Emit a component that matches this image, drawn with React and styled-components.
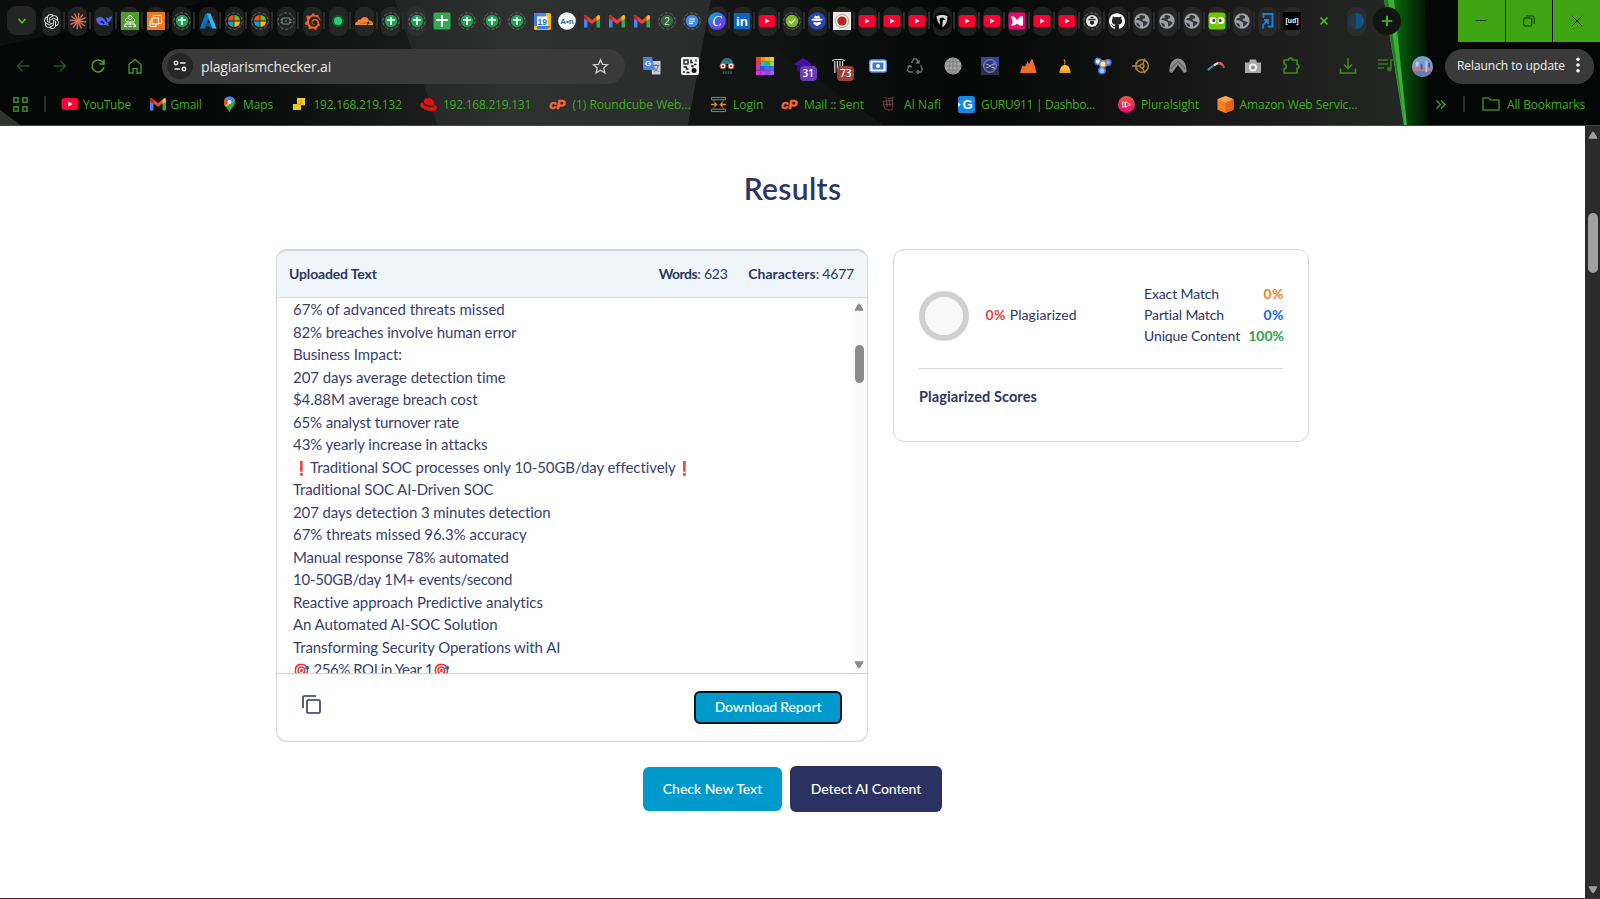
import React from 'react';
import styled, { createGlobalStyle } from 'styled-components';
import { SiOpenai, SiGithub, SiGrafana, SiCloudflare, SiRedhat } from 'react-icons/si';

const GlobalStyle = createGlobalStyle`
  *, *::before, *::after { box-sizing: border-box; }
  body { margin: 0; background: #fff; overflow: hidden; }
`;
const ui = '"Open Sans", "Noto Sans", sans-serif';
const body = 'Lato, "Noto Sans", sans-serif';
const green = '#3fae1c';
const navy = '#2c3564';

/* ---------- browser frame ---------- */
const Screen = styled.div`
  display: flex;
  flex-direction: column;
  width: 1600px;
  height: 899px;
  background: #fff;
  border-bottom: 1px solid #333;
`;
const Chrome = styled.header`
  position: relative;
  flex: none;
  display: flex;
  flex-direction: column;
  height: 126px;
  background: #050606;
  border-bottom: 1px solid #45453f;
  overflow: hidden;
  font-family: ${ui};
`;
const Wallpaper = styled.svg`
  position: absolute;
  inset: 0;
  width: 1600px;
  height: 126px;
`;
const TabStrip = styled.div`
  position: relative;
  display: flex;
  height: 42px;
`;
const TabMenu = styled.div`
  display: flex;
  align-items: center;
  justify-content: center;
  width: 29px;
  height: 29px;
  margin: 6px 2.5px 0 7px;
  border-radius: 9px;
  background: #252525;
`;
const Tab = styled.div`
  display: flex;
  align-items: center;
  justify-content: center;
  width: ${p => p.$w}px;
  height: 42px;
  background: ${p => (p.$last ? 'none' : 'linear-gradient(#2b2b2b, #2b2b2b) 100% 12px / 2px 17px no-repeat')};
`;
const Pill = styled.div`
  display: flex;
  align-items: center;
  justify-content: center;
  width: 19px;
  height: 29px;
  border-radius: 8px;
  background: ${p => (p.$plain ? 'transparent' : 'rgba(54, 54, 54, 0.5)')};
  svg { flex: none; overflow: visible; }
`;
const CloseTab = styled.div`
  display: flex;
  align-items: center;
  justify-content: center;
  width: 39px;
`;
const NewTab = styled.div`
  display: flex;
  align-items: center;
  justify-content: center;
  width: 28px;
  height: 28px;
  margin: 7px 0 0 4px;
  border-radius: 50%;
  background: #131513;
`;
const WindowButtons = styled.div`
  display: flex;
  gap: 1px;
  margin-left: auto;
`;
const WindowButton = styled.div`
  display: flex;
  align-items: center;
  justify-content: center;
  width: ${p => p.$w || 47}px;
  height: 42px;
  background: #40a512;
`;
const Toolbar = styled.div`
  position: relative;
  display: flex;
  align-items: center;
  height: 48px;
`;
const NavButtons = styled.div`
  display: flex;
  padding-left: 4px;
  width: 162px;
`;
const NavButton = styled.div`
  display: flex;
  justify-content: center;
  width: 37.5px;
`;
const AddressBar = styled.div`
  display: flex;
  align-items: center;
  width: 463px;
  height: 35px;
  padding: 0 16px 0 5px;
  border-radius: 18px;
  background: #3a3a3a;
  color: #e8e8e8;
  font-size: 14px;
  letter-spacing: -0.17px;
`;
const SiteInfo = styled.div`
  display: flex;
  align-items: center;
  justify-content: center;
  width: 26px;
  height: 26px;
  margin-right: 8px;
  border-radius: 50%;
  background: #262626;
`;
const Url = styled.span`flex: 1;`;
const Extensions = styled.div`
  display: flex;
  padding-left: 8.5px;
`;
const Extension = styled.div`
  position: relative;
  display: flex;
  justify-content: center;
  width: 37.57px;
`;
const Badge = styled.span`
  position: absolute;
  left: 16px;
  top: 9px;
  width: 17px;
  height: 15px;
  border-radius: 4px;
  background: ${p => p.$bg};
  color: #fff;
  font-size: 10px;
  font-weight: 600;
  line-height: 15px;
  text-align: center;
`;
const ToolbarEnd = styled.div`
  display: flex;
  align-items: center;
  margin-left: auto;
  padding-right: 6px;
`;
const EndIcon = styled.div`
  display: flex;
  width: ${p => p.$w}px;
`;
const Relaunch = styled.div`
  display: flex;
  align-items: center;
  justify-content: space-between;
  width: 149px;
  height: 35px;
  padding: 0 14px 2px 12px;
  border-radius: 18px;
  background: #3a3a3a;
  color: #f2f2f2;
  font-size: 12px;
  letter-spacing: -0.07px;
`;
const Bookmarks = styled.div`
  position: relative;
  display: flex;
  align-items: center;
  height: 28px;
  margin-bottom: 7px;
  color: ${green};
`;
const AppsButton = styled.div`
  display: flex;
  width: 32px;
  margin-left: 12px;
`;
const Divider = styled.div`
  width: 2px;
  height: 16px;
  background: #2c2c2c;
  margin-right: ${p => p.$gap}px;
`;
const Bookmark = styled.div`
  display: flex;
  align-items: center;
  gap: ${p => p.$gap || 6}px;
  width: ${p => p.$w}px;
  font-size: 12px;
  letter-spacing: ${p => p.$ls}px;
  white-space: nowrap;
  svg { flex: none; }
`;
const More = styled.div`
  display: flex;
  margin-left: auto;
  width: 28px;
`;

/* ---------- page ---------- */
const Viewport = styled.div`
  display: flex;
  flex: 1;
  min-height: 0;
`;
const Page = styled.main`
  flex: 1;
  display: flex;
  flex-direction: column;
  align-items: center;
  font-family: ${body};
  color: ${navy};
`;
const PageScroll = styled.div`
  display: flex;
  flex-direction: column;
  align-items: center;
  width: 15px;
  padding: 5px 0 4px;
  background: #2b2b2b;
`;
const Thumb = styled.div`
  width: ${p => p.$w}px;
  height: ${p => p.$h}px;
  margin: ${p => p.$top}px 0 auto;
  border-radius: 5px;
  background: ${p => p.$bg};
`;
const Title = styled.h1`
  margin: 42px 0 0;
  font-size: 30px;
  font-weight: 600;
  line-height: 40px;
  letter-spacing: 0.35px;
`;
const Columns = styled.div`
  display: flex;
  align-items: flex-start;
  gap: 25px;
  width: 1033px;
  margin-top: 41px;
`;
const TextCard = styled.section`
  display: flex;
  flex-direction: column;
  width: 592px;
  height: 493px;
  border: 1px solid #d2d4d6;
  border-top-width: 2px;
  border-radius: 11px;
  overflow: hidden;
`;
const CardHead = styled.div`
  display: flex;
  align-items: center;
  height: 47px;
  padding: 0 13px 2px 12px;
  border-bottom: 1px solid #d8dcdf;
  background: #eff5f8;
  font-size: 14px;
`;
const HeadLabel = styled.b`letter-spacing: ${p => p.$ls}px;`;
const Counter = styled.span`
  margin-left: ${p => p.$left};
  letter-spacing: -0.2px;
`;
const ScrollArea = styled.div`
  display: flex;
  flex: none;
  height: 376px;
  border-bottom: 1px solid #cfcfcf;
  overflow: hidden;
`;
const Lines = styled.div`
  flex: 1;
  padding-left: 16px;
`;
const Line = styled.div`
  height: 22.5px;
  font-size: 15px;
  line-height: 23px;
  letter-spacing: ${p => p.$ls}px;
  color: #373f70;
  white-space: pre;
`;
const Emoji = styled.span`
  display: inline-flex;
  justify-content: center;
  width: 17px;
  font-size: 13.5px;
  line-height: 16px;
  letter-spacing: 0;
`;
const CardScroll = styled.div`
  display: flex;
  flex-direction: column;
  align-items: center;
  width: 16px;
  padding: 5px 0 4px;
  background: #fafafa;
`;
const CardFoot = styled.div`
  display: flex;
  align-items: center;
  justify-content: space-between;
  flex: 1;
  padding: 0 25px;
`;
const CopyIcon = styled.div`
  display: flex;
  padding-bottom: 6px;
`;
const Button = styled.button`
  width: ${p => p.$w}px;
  height: ${p => p.$h}px;
  padding: 0 0 ${p => (p.$focus ? 2 : 1)}px;
  border: ${p => (p.$focus ? '2px solid #06141a' : '0')};
  border-radius: 6px;
  background: ${p => (p.$dark ? '#2b3261' : '#0099cc')};
  color: #fff;
  font: 500 14px ${body};
  letter-spacing: ${p => p.$ls}px;
`;
const ScoreCard = styled.section`
  width: 416px;
  height: 193px;
  padding: 0 25px;
  border: 1px solid #d4d6d8;
  border-radius: 11px;
`;
const Scores = styled.div`
  display: flex;
  align-items: center;
  height: 119px;
  padding-top: 13px;
  border-bottom: 1px solid #d4d4d4;
  font-size: 14px;
`;
const Ring = styled.div`
  width: 50px;
  height: 50px;
  margin-right: 16.5px;
  border: 6px solid #d0d0d0;
  border-radius: 50%;
  background: #f9f9f9;
`;
const Plagiarized = styled.span`
  padding-bottom: 2px;
  letter-spacing: 0.08px;
`;
const Value = styled.b`
  color: ${p => p.$c};
  letter-spacing: ${p => p.$ls || 0}px;
`;
const Matches = styled.div`
  display: grid;
  grid-template-rows: repeat(3, 21.3px);
  width: 140px;
  margin: 0 -1px 0 auto;
  padding-bottom: 2px;
`;
const Match = styled.div`
  display: flex;
  justify-content: space-between;
  line-height: 21px;
  letter-spacing: -0.13px;
`;
const ScoresTitle = styled.h2`
  margin: 17px 0 0;
  font-size: 14.5px;
  line-height: 22px;
  letter-spacing: 0.1px;
`;
const Actions = styled.div`
  display: flex;
  align-items: center;
  gap: 8px;
  margin: 24px 0 0 0;
`;

/* ---------- icons ---------- */
const Svg = ({ s = 18, vb = 18, children }) => (
  <svg width={s} height={s} viewBox={`0 0 ${vb} ${vb}`} fill="none">{children}</svg>
);
const Dashes = () => <circle cx="9" cy="9" r="8.2" stroke="#6a706a" strokeWidth="1" strokeDasharray="3.5 1.65" />;
const YouTube = () => <Svg><rect x=".6" y="3" width="16.8" height="12" rx="2.8" fill="#ff0033" /><path d="M7.3 6.5v5l4.3-2.5z" fill="#fff" /></Svg>;
const Gmail = () => (
  <Svg>
    <path d="M1 4.5v11h3.5V7z" fill="#4285f4" /><path d="M17 4.5v11h-3.500V7z" fill="#34a853" />
    <path d="M1 3.5 2.500 3 9 8l6.500-5L17 3.500V6L9 12 1 6z" fill="#ea4335" />
    <path d="M13.500 4.500 15.500 3 17 4v2.500l-3.500 2.500z" fill="#fbbc04" /><path d="M1 4v2.500L4.500 9V5L2.500 3z" fill="#c5221f" />
  </Svg>
);
const SheetRing = () => <Svg><Dashes /><circle cx="9" cy="9" r="6.200" fill="#1fa352" /><path d="M9 5v8M5 8h8" stroke="#fff" strokeWidth="1.700" /></Svg>;
const Sheet = () => <Svg><rect x=".5" y=".5" width="17" height="17" rx="1.500" fill="#34a853" /><path d="M9 3v12M3 8h12" stroke="#fff" strokeWidth="2" /></Svg>;
const MsRing = () => (
  <Svg><Dashes /><path d="M8.600 8.600V3A6 6 0 0 0 3 8.600z" fill="#f25022" /><path d="M9.400 8.600V3A6 6 0 0 1 15 8.600z" fill="#7fba00" /><path d="M8.600 9.400V15A6 6 0 0 1 3 9.400z" fill="#00a4ef" /><path d="M9.400 9.400V15A6 6 0 0 0 15 9.400z" fill="#ffb900" /></Svg>
);
const Globe = () => (
  <Svg>
    <circle cx="9" cy="9" r="7.700" fill="#9aa0a6" />
    <path d="M8.500 2.800 6.500 4v2H4.500L3 8c2 0 3.500 0 4.500 1 .500 1 2.500.500 2.500 2v3.500c2-.500 3.500-2 4.800-4-1.500-.5-2-1.500-3.300-1.500-1 0-2-.3-2-1.200 0-1 1-1.300 2.500-1.300V4.300z" fill="#34373a" />
    <path d="M3 10.500c1.500.5 3 1 3.500 2s0 2 .5 3C4.800 14.500 3.300 12.800 3 10.500z" fill="#34373a" />
  </Svg>
);
const Burst = () => <Svg><g stroke="#d97757" strokeWidth="1.300" strokeLinecap="round">{[0, 30, 60, 90, 120, 150].map(a => <path key={a} d="M9 1.300v15.400" transform={`rotate(${a + 6} 9 9)`} />)}</g></Svg>;
const Whale = () => <Svg><path d="M1 7c1-2 5-3 8 0 1.500 1.500 2 3 3.500 4 .500-2-1.500-4-1.500-6.500 1 2 2.500 1.500 3 1.500.500-1 1.500-1.500 3-2-.500 5-2.500 5.500-4 6-.500 2.500 1 3.500 1 4-2-.500-3-1-4-1-4 1-8-.500-9-6z" fill="#5068f0" /><path d="M5.500 9.500c1.500 0 3 1 3.500 2.500" stroke="#151515" strokeWidth="1.300" /></Svg>;
const Azure = () => <Svg><path d="M6.500 1.500h5L6 16.500H1z" fill="#1070c8" /><path d="M11.500 1.500H8l5 15h4.500z" fill="#35b4ee" /><path d="m4.500 12 6-1 3 5.500z" fill="#0c5aa8" /></Svg>;
const Ec2 = () => <Svg><rect width="18" height="18" fill="#ed7a1c" /><g stroke="#fff" strokeWidth="1"><path d="M6.500 6V3.500h8v8H12" /><rect x="5" y="6" width="6.500" height="6" /><path d="M5 9H3v5.500h6V12" /></g></Svg>;
const Load = () => <Svg><rect width="18" height="18" fill="#4e9d2d" /><g stroke="#fff" strokeWidth="1"><circle cx="9" cy="5.500" r="2" /><path d="M6 6.500c-2 0-2 3.500 0 3.500h6c2 0 2-3.500 0-3.500M9 10v3M4 14v-2h10v2M3 14.500h3M7.500 14.500h3M12 14.500h3" /></g></Svg>;
const AppRing = () => <Svg><Dashes /><rect x="5" y="6" width="8" height="6" rx="1" stroke="#8a8d8a" /><path d="M3.500 7.500h2M3.500 10.500h2M12.500 7.500h2M12.500 10.500h2M8 9h2" stroke="#8a8d8a" /></Svg>;
const Dot = () => <Svg><circle cx="9" cy="9" r="6" fill="#0b5e31" /><circle cx="9" cy="9" r="4" fill="#25cf6d" /></Svg>;
const tiny = (t, x, y, size, fill, extra = {}) => <text x={x} y={y} fontSize={size} fill={fill} textAnchor="middle" fontFamily="Liberation Sans, sans-serif" letterSpacing="0" {...extra}>{t}</text>;
const Cal = () => <Svg><rect x="1" y="1" width="17" height="17" rx="1.500" fill="#fbbc04" /><path d="M1 1h12v4H1z" fill="#4285f4" /><path d="M1 2h3v12H1zM4 14h10v3H4z" fill="#3b7bea" /><path d="M14 14h3.500L14 17.500z" fill="#ea4335" /><rect x="4" y="4.500" width="10.500" height="9.500" fill="#fff" />{tiny('19', 9.200, 12.500, 8.500, '#1a66d6', { fontWeight: 700 })}</Svg>;
const Acn = () => <Svg><circle cx="9" cy="9" r="8.800" fill="#f6f8fa" />{tiny('A•n', 9, 11.500, 8, '#26699c', { fontWeight: 700 })}</Svg>;
const TwoRing = () => <Svg><Dashes /><circle cx="9" cy="9" r="6.200" fill="#37663a" />{tiny('2', 9, 12.500, 10, '#c8e6c4')}</Svg>;
const DocRing = () => <Svg><Dashes /><circle cx="9" cy="9" r="6.300" fill="#4585ee" /><path d="M6 7h6M6 9.200h6M6 11.400h4" stroke="#fff" strokeWidth="1.100" /></Svg>;
const Canva = () => <Svg><defs><linearGradient id="cv" x1="0" y1="0" x2="1" y2="1"><stop stopColor="#00c4cc" /><stop offset=".5" stopColor="#4a5be8" /><stop offset="1" stopColor="#8a2be8" /></linearGradient></defs><circle cx="9" cy="9" r="8.800" fill="url(#cv)" />{tiny('C', 9, 13.500, 14, '#fff', { fontStyle: 'italic', fontFamily: 'Liberation Serif, serif' })}</Svg>;
const LinkedIn = () => <Svg><rect x="1" y="1" width="16" height="16" rx="1" fill="#0a66c2" />{tiny('in', 9, 14, 13.500, '#fff', { fontWeight: 700 })}</Svg>;
const CheckRing = () => <Svg><Dashes /><circle cx="9" cy="9" r="6.300" fill="#7cb927" /><path d="m6.300 9.200 2 2 3.600-4" stroke="#fff" strokeWidth="1.400" /></Svg>;
const Agent = () => <Svg><circle cx="9" cy="9" r="8.800" fill="#2848ad" /><path d="M6 6 7 3.500l2 .7 2-.7L12 6zM3.500 7c3.500-1 7.500-1 11 0v1.200c-3.500 1-7.500 1-11 0zM5.500 9.800l3 .8 4-.8.5 2-4 2.500-3.500-2.500z" fill="#fff" /></Svg>;
const Seal = () => <Svg><rect width="18" height="18" fill="#e9e9e6" /><circle cx="9" cy="9" r="6.700" stroke="#a88" strokeWidth=".7" /><circle cx="9" cy="9" r="4.600" fill="#b62424" /></Svg>;
const Shield = () => <Svg><circle cx="9" cy="9" r="9" fill="#050505" /><path d="M3.500 4c3-1.500 8-1.500 11 0-.2 5-1 8-5 11.500 0-3.500 0-5.500.5-7.500H13l-3-2.500-3.500 1L7 12.500C5 10.500 4 8 3.500 4z" fill="#d8d8d8" /><path d="M8 6.500v7" stroke="#050505" strokeWidth="1.200" /></Svg>;
const Mx = () => <Svg><rect x=".5" y=".5" width="17" height="17" rx="2.500" fill="#e5096f" /><path d="M3 4.500h3l3 3.500 3-3.500h3v9h-3.500L9 11.500l-2.500 2H3l1.500-2.500V8z" fill="#fff" /></Svg>;
const LockRing = () => <Svg><Dashes /><circle cx="9" cy="9" r="6" fill="#e6e6e6" /><path d="M5.500 7.500h7M7.500 5.300h3" stroke="#222" strokeWidth="1.300" /><path d="M7 9h4v2.500L9 13l-2-1.500z" fill="#222" /></Svg>;
const Owl = () => <Svg><rect x=".5" y=".5" width="17" height="17" rx="3" fill="#6cc70a" /><circle cx="5" cy="8.500" r="3.400" fill="#fff" /><circle cx="13" cy="8.500" r="3.400" fill="#fff" /><circle cx="5.800" cy="8.500" r="1.500" fill="#333" /><circle cx="12.200" cy="8.500" r="1.500" fill="#333" /><path d="M7 11h4l-2 2.500z" fill="#f7a800" /></Svg>;
const Blue = () => <Svg><path d="M5.500 6V2h9v12.500H10" stroke="#1684dc" strokeWidth="1.900" /><path d="M5 16.500v-3.500l4.500-4.500M6 8h4v4" stroke="#1684dc" strokeWidth="1.800" /></Svg>;
const Ud = () => <Svg><rect width="18" height="18" fill="#000" />{tiny('[ud]', 9, 11, 6.800, '#fff', { fontWeight: 700 })}</Svg>;
const Half = () => <Svg><path d="M9 1a8 8 0 0 0 0 16z" fill="#26384c" /><path d="M9 1a8 8 0 0 1 0 16z" fill="#0c5484" /></Svg>;

const G = green;
const dim = '#23590f';
const firstTabs = [<SiOpenai size={15} color="#e8e8e8" />, <Burst />, <Whale />, <Load />, <Ec2 />, <SheetRing />, <Azure />, <MsRing />, <MsRing />, <AppRing />, <SiGrafana size={17} color="#f2622a" />, <Dot />, <SiCloudflare size={18} color="#f48a2b" />, <SheetRing />, <SheetRing />];
const otherTabs = [<Sheet />, <SheetRing />, <SheetRing />, <SheetRing />, <Cal />, <Acn />, <Gmail />, <Gmail />, <Gmail />, <TwoRing />, <DocRing />, <Canva />, <LinkedIn />, <YouTube />, <CheckRing />, <Agent />, <Seal />, <YouTube />, <YouTube />, <YouTube />, <Shield />, <YouTube />, <YouTube />, <Mx />, <YouTube />, <YouTube />, <LockRing />, <SiGithub size={16} color="#fff" />, <Globe />, <Globe />, <Globe />, <Owl />, <Globe />, <Blue />, <Ud />];

const Translate = () => <Svg><path d="M8 4h9.500v13.500H9z" fill="#c9cdd2" /><path d="M0 0h9l3 13H1.500A1.500 1.500 0 0 1 0 11.500z" fill="#4a86e8" />{tiny('G', 5.200, 9, 8, '#fff', { fontWeight: 700 })}<path d="M10.500 8.500H16M13 7v1.500M15 9c-.500 3-2 4.500-4 5.500M11.500 10.500c1 2 2 3 4 4" stroke="#5a646e" strokeWidth=".9" /></Svg>;
const Qr = () => <Svg><rect width="18" height="18" rx="2" fill="#f0f0f0" /><g stroke="#151515" strokeWidth="1.300"><rect x="3" y="3" width="4" height="4" /><path d="M10 2.500v3h2M15 2.500v2M13 7.500h2.500M2.500 10h3v2h2M10 9h2v1.500M3 14v2M5.500 15.500h3" /></g><circle cx="13" cy="13.500" r="2.500" fill="#151515" /></Svg>;
const Mask = () => <Svg><path d="M3 7c0-8 12-8 12 0z" fill="#2d7680" /><circle cx="5" cy="9" r="3" fill="#f4dcd0" stroke="#a85a48" /><circle cx="13" cy="9" r="3" fill="#f4dcd0" stroke="#a85a48" /><circle cx="5" cy="9" r="1" fill="#333" /><circle cx="13" cy="9" r="1" fill="#333" /><path d="M5.500 14v3M8 14v3M10.500 14v3M13 14v3" stroke="#245c66" strokeWidth="1.500" /></Svg>;
const Rainbow = () => {
  const c = ['#f24a18', '#ff8a10', '#ffb010', '#e8dc18', '#e83a48', '#28b8e0', '#18c850', '#a0d818', '#b838d8', '#2858e8', '#3078f0', '#4868f0', '#d838c0', '#c040e8', '#9048f0', '#a858f8'];
  return <Svg>{c.map((f, i) => <rect key={i} x={(i % 4) * 4.500} y={Math.floor(i / 4) * 4.500} width="4.600" height="4.600" fill={f} />)}</Svg>;
};
const Cap = () => <Svg><path d="m9 1 9 6-9 5-9-5z" fill="#4311a8" /><path d="M3 8v6l6 3 5-3V8l-5 3z" fill="#35107f" /></Svg>;
const Bin = () => <Svg><path d="M1.500 4C2 2.500 3 2.500 5 2.500h5c2 0 3 0 3.500 1.500M3.800 4v12M6.400 4v11M9 4v11M11.600 4v11" stroke="#d8d8d8" strokeWidth="1.200" /></Svg>;
const Cam = () => <Svg><rect x=".7" y="3" width="16.600" height="12" rx="2" fill="#fff" stroke="#4c8df0" strokeWidth="1.400" /><rect x="3.500" y="5.500" width="11" height="7" fill="#4178d8" /><circle cx="9" cy="9" r="2" fill="#fff" /></Svg>;
const Recycle = () => <Svg><g stroke="#6c6c6c" strokeWidth="1.400"><path d="m5.500 6 2-4h3L12.500 6M13 3v3h-3M3.500 9 1.500 12.500 3 15h4M5.500 10.500 4 8.500l-2.500 1M14.500 8.500l2 4L15 15h-4M12.500 13 10.700 15l1.800 2" /></g></Svg>;
const Web = () => <Svg><circle cx="9" cy="9" r="8.500" fill="#a4a4a4" /><g stroke="#6e6e6e" strokeWidth=".7"><ellipse cx="9" cy="9" rx="4" ry="8.300" /><path d="M9 .5v17M.5 9h17M2 4.800h14M2 13.200h14" /></g></Svg>;
const Shuffle = () => <Svg><rect width="18" height="18" fill="#2b3044" /><path d="M0 0h18v9H0z" fill="#33479e" /><circle cx="9" cy="9" r="6.300" fill="#333a69" stroke="#98a2d8" strokeWidth=".9" /><path d="M4.500 7c4.500 0 4.500 4 9 4M4.500 11c4.500 0 4.500-4 9-4M12 5.500 13.500 7 12 8.500M12 9.500l1.500 1.500-1.500 1.500" stroke="#aab3e4" strokeWidth=".9" /></Svg>;
const Peaks = () => <Svg><path d="M1 16 2.500 11 4 8.500l2 1 2.500-5L10 7l3-5.500 3 8L17.500 16z" fill="#f16c26" /></Svg>;
const Bell = () => <Svg><path d="M4 14c0-8 10-8 10 0z" fill="#fcc02c" /><path d="M3.500 13.500h11v2.500h-11z" fill="#e9a21c" /><path d="M8 2.500 9 4.500l-.5 3" stroke="#c98d1c" strokeWidth="1.200" /></Svg>;
const Hex = () => <Svg><g strokeWidth="1.500"><circle cx="4" cy="4.500" r="3" fill="#dbe9ff" stroke="#3b86e4" /><circle cx="14" cy="5.500" r="3" fill="#7ab0f2" stroke="#2b6fd0" /><circle cx="8" cy="13.500" r="3.300" fill="#98c2f8" stroke="#2b6fd0" /><circle cx="9" cy="7" r="3.300" fill="#f6e5cb" stroke="#a78455" /></g></Svg>;
const Wheel = () => <Svg><circle cx="10" cy="9" r="6.300" stroke="#b08a38" strokeWidth="1.500" /><circle cx="10" cy="9" r="2" stroke="#b08a38" strokeWidth="1.300" /><path d="M0 9h8M10.700 7 13 1.500M10.700 11l2.300 5.500M3.500 5.500 5.500 7M3.500 12.500l2-1.500" stroke="#b08a38" strokeWidth="1.300" /></Svg>;
const Peak = () => <Svg><path d="M.5 15C-.5-3 18.500-3 17.500 15l-2.500 1-6-8-6 8z" fill="#8d8d8d" /><path d="M1.500 12 9 4.500l7.500 7.500" stroke="#4a4a4a" /></Svg>;
const Boomerang = () => <Svg><path d="M1 13C5 9.500 9 6 12 6s4.500 2.500 5 5" stroke="#3b7ad0" strokeWidth="1.900" /><path d="M1 13c1-1 1.800-1.700 3-2.500" stroke="#3cb05a" strokeWidth="1.900" /><path d="M7 8.300C9 7 10.500 6 12 6" stroke="#f2d8b0" strokeWidth="2.100" /><path d="M11 6c2-.1 3.500.700 4.500 2.200" stroke="#ec5b34" strokeWidth="2.400" /></Svg>;
const Photo = () => <Svg><path d="M1 5.500h4l1-3h6l1 3h4V16H1z" fill="#a9a9a9" /><circle cx="9" cy="10.500" r="4" fill="#eee" /><circle cx="9" cy="10.500" r="2" fill="#8e8e8e" /></Svg>;
const Puzzle = () => <Svg><path d="M2 3h4.500c0-2.500 4-2.500 4 0H15v4.500c2.500 0 2.500 4 0 4V16H2v-4c3 0 3-5 0-5z" stroke="#3a8c1d" strokeWidth="1.600" /></Svg>;
const extensions = [<Translate />, <Qr />, <Mask />, <Rainbow />, [<Cap />, '31', '#6a3cb4'], [<Bin />, '73', '#9c403c'], <Cam />, <Recycle />, <Web />, <Shuffle />, <Peaks />, <Bell />, <Hex />, <Wheel />, <Peak />, <Boomerang />, <Photo />, <Puzzle />];

const Pin = () => (
  <Svg s={17}>
    <path d="M9 17.500C8.300 13.500 3.200 11.500 3.200 6.500a5.800 5.800 0 0 1 11.600 0C14.800 11.500 9.700 13.500 9 17.500z" fill="#34a853" />
    <path d="M3.200 6.500A5.800 5.800 0 0 1 9 .7c3 0 5.200 2 5.700 4.300L5 11.500C4 10 3.200 8.500 3.200 6.500z" fill="#fbbc04" />
    <path d="M3.200 6.500c0-1.500.5-2.700 1.400-3.800L8.500 6 4.300 10.300C3.600 9.200 3.200 8 3.200 6.500z" fill="#ea4335" />
    <path d="M4.600 2.700C7.500-.7 13.500.2 14.700 5L10 8.500z" fill="#4285f4" />
    <circle cx="9" cy="6.300" r="2.100" fill="#fff" />
  </Svg>
);
const Blocks = () => <Svg s={12}><path d="M6 0h12v11h-6v7H0V9h6z" fill="#f2c71e" /><path d="M6 9h6V3" stroke="#9b7b10" /></Svg>;
const CPanel = () => <Svg s={17}>{tiny('cP', 8.700, 14, 14, '#f0693a', { fontWeight: 700, fontStyle: 'italic', stroke: '#f0693a', strokeWidth: 0.6 })}</Svg>;
const LoginIcon = () => <Svg s={17}><path d="M1.500 1.500h15v2.500h-15zM1.500 14h15v2.500h-15z" stroke="#8c8c8c" /><path d="M4 4c0 3 2 3.500 2 5s-2 2-2 5M14 4c0 3-2 3.500-2 5s2 2 2 5" stroke="#777" /><path d="M1 9h6M5 7l2 2-2 2M17 9h-6M13 7l-2 2 2 2" stroke="#e98a1c" strokeWidth="1.400" /></Svg>;
const Nafi = () => <Svg s={16}><path d="M2 5c2 3 0 5 2 8s8 4 9 1M6 4l1 8M9 3l1 9M13 2c-1 4 1 6 0 11" stroke="#84262c" strokeWidth="1.500" /><path d="M3 1.500c3 1 8 2 12-.5M3 6l11-1M4 10l10-1" stroke="#54606e" strokeWidth=".9" /></Svg>;
const Guru = () => <Svg s={17}><rect width="18" height="18" rx="3" fill="#1388ea" /><path d="M0 6.500 3 9l-3 2.500z" fill="#fff" />{tiny('G', 10.300, 14, 14, '#fff', { fontWeight: 700 })}</Svg>;
const Plural = () => <Svg s={17}><defs><linearGradient id="ps" x1="0" y1="0" x2="0" y2="1"><stop stopColor="#f0563c" /><stop offset="1" stopColor="#e30a78" /></linearGradient></defs><circle cx="9" cy="9" r="9" fill="url(#ps)" /><path d="M5 6v6l2.500-1.300V7.300zM8 6v6l5-3z" stroke="#fff" strokeWidth=".8" /></Svg>;
const Cube = () => <Svg s={17}><path d="m9 0 8.500 3.500v11L9 18 .5 14.500v-11z" fill="#f58220" /><path d="m9 0 8.500 3.500L9 7 .5 3.500z" fill="#fba354" /><path d="M9 7v11l8.500-3.500v-11z" fill="#df6614" /></Svg>;
const bookmarks = [
  [<YouTube />, 'YouTube', 87.5, -0.2, 4], [<Gmail />, 'Gmail', 72, -0.3, 4], [<Pin />, 'Maps', 72, -0.13, 5.500],
  [<Blocks />, '192.168.219.132', 127, -0.25, 9], [<SiRedhat size={17} color="#e8140c" />, '192.168.219.131', 129.5, -0.25, 6.500],
  [<CPanel />, '(1) Roundcube Web...', 161, -0.03, 6.500], [<LoginIcon />, 'Login', 71, 0, 6],
  [<CPanel />, 'Mail :: Sent', 100, -0.1, 6], [<Nafi />, 'Al Nafi', 77, 0.1, 7],
  [<Guru />, 'GURU911 | Dashbo...', 160, -0.3, 6], [<Plural />, 'Pluralsight', 99, -0.1, 6], [<Cube />, 'Amazon Web Servic...', 150, -0.07, 5.500],
];

/* ---------- text ---------- */
const Bang = () => <Emoji>❗</Emoji>;
const Target = () => <Emoji>🎯</Emoji>;
const lines = [
  ['67% of advanced threats missed', -0.01], ['82% breaches involve human error', -0.14], ['Business Impact:', -0.04],
  ['207 days average detection time', -0.05], ['$4.88M average breach cost', -0.09], ['65% analyst turnover rate', -0.14],
  ['43% yearly increase in attacks', -0.07], [<><Bang />Traditional SOC processes only 10-50GB/day effectively<Bang /></>, -0.07],
  ['Traditional SOC AI-Driven SOC', -0.13], ['207 days detection 3 minutes detection', -0.1], ['67% threats missed 96.3% accuracy', -0.05],
  ['Manual response 78% automated', -0.15], ['10-50GB/day 1M+ events/second', -0.22], ['Reactive approach Predictive analytics', -0.03],
  ['An Automated AI-SOC Solution', -0.09], ['Transforming Security Operations with AI', -0.08], [<><Target /> 256% ROI in Year 1<Target /></>, -0.43],
];

const Arrow = ({ down, c }) => <svg width="10" height="8" viewBox="0 0 10 8"><path d={down ? 'M1 .8h8L5.700 6.600q-.7.800-1.400 0z' : 'M1 7.200h8L5.700 1.400q-.7-.8-1.400 0z'} fill={c} stroke={c} strokeLinejoin="round" /></svg>;

export default function App() {
  return (
    <Screen>
      <GlobalStyle />
      <Chrome>
        <Wallpaper viewBox="0 0 1600 126">
          <defs>
            <linearGradient id="mid"><stop stopColor="#232524" /><stop offset=".35" stopColor="#2f3030" /><stop offset="1" stopColor="#2b2c2c" /></linearGradient>
            <linearGradient id="soft"><stop stopColor="#050606" /><stop offset="1" stopColor="#1c1e1d" /></linearGradient>
            <linearGradient id="right"><stop stopColor="#050606" /><stop offset=".6" stopColor="#181918" /><stop offset="1" stopColor="#252725" /></linearGradient>
            <linearGradient id="edge"><stop stopColor="#161717" /><stop offset="1" stopColor="#050606" /></linearGradient>
            <linearGradient id="glow"><stop stopColor="#169a1a" /><stop offset=".35" stopColor="#07560b" /><stop offset="1" stopColor="#020902" /></linearGradient>
          </defs>
          <path d="M0 0h215L0 46z" fill="#0d0f0e" />
          <path d="M0 110 22 126H0z" fill="#30322f" />
          <path d="M200 0h205l35 126H200z" fill="url(#soft)" />
          <path d="M395 0h316l-23 126H438z" fill="url(#mid)" />
          <path d="M711 0h260v126H688z" fill="url(#edge)" />
          <path d="M755 33 800 68l85 58H688l17-93z" fill="#121313" />
          <path d="M980 0h408l16 126H960z" fill="url(#right)" />
          <path d="M1385 0h40l5 126h-26z" fill="url(#glow)" />
          <path d="M1384 0h10l13 126h-3z" fill="#3cae3a" />
          <path d="M1384 0h4l17 126z" fill="#1f7a20" />
        </Wallpaper>
        <TabStrip>
          <TabMenu><Svg s={10} vb={10}><path d="m1.500 3 3.500 3.800L8.500 3" stroke="#46c81e" strokeWidth="1.700" /></Svg></TabMenu>
          {firstTabs.map((t, i) => <Tab key={i} $w={26.08}><Pill>{t}</Pill></Tab>)}
          {otherTabs.map((t, i) => <Tab key={i} $w={25} $last={i === otherTabs.length - 1}><Pill $plain={i < 11}>{t}</Pill></Tab>)}
          <CloseTab><Svg s={10} vb={10}><path d="m1.500 1.500 7 7m0-7-7 7" stroke="#46c81e" strokeWidth="1.700" /></Svg></CloseTab>
          <Tab $w={25} $last><Pill><Half /></Pill></Tab>
          <NewTab><Svg s={12} vb={12}><path d="M6 .8v10.400M.8 6h10.400" stroke="#46c81e" strokeWidth="1.700" /></Svg></NewTab>
          <WindowButtons>
            <WindowButton><Svg s={12} vb={12}><path d="M.5 5.500h11" stroke="#123005" /></Svg></WindowButton>
            <WindowButton $w={46.5}><Svg s={12} vb={12}><rect x=".8" y="3" width="8" height="8" rx="1" stroke="#123005" /><path d="M3 1h6.500A1.700 1.700 0 0 1 11.200 2.700V9" stroke="#123005" /></Svg></WindowButton>
            <WindowButton><Svg s={12} vb={12}><path d="m.8.8 10.400 10.400m0-10.400L.8 11.200" stroke="#123005" /></Svg></WindowButton>
          </WindowButtons>
        </TabStrip>
        <Toolbar>
          <NavButtons>
            <NavButton><Svg s={16} vb={16}><path d="M14.500 8H2.500M8 2.500 2.500 8 8 13.500" stroke={dim} strokeWidth="1.500" /></Svg></NavButton>
            <NavButton><Svg s={16} vb={16}><path d="M1.500 8h12M8 2.500 13.500 8 8 13.500" stroke={dim} strokeWidth="1.500" /></Svg></NavButton>
            <NavButton><Svg s={16} vb={16}><path d="M13 4.500A6 6 0 1 0 14 9M14 1.500V6H9.500" stroke={G} strokeWidth="1.500" /></Svg></NavButton>
            <NavButton><Svg s={16} vb={16}><path d="M2 6.500 8 1.500l6 5V15h-4v-4.500H6V15H2z" stroke="#3a9a1c" strokeWidth="1.400" /></Svg></NavButton>
          </NavButtons>
          <AddressBar>
            <SiteInfo><Svg s={14} vb={14}><g stroke="#e6e6e6" strokeWidth="1.500"><circle cx="3" cy="4" r="1.700" /><path d="M7 4h5.500M1.500 10H7" /><circle cx="11" cy="10" r="1.700" /></g></Svg></SiteInfo>
            <Url>plagiarismchecker.ai</Url>
            <Svg s={17}><path d="m9 1.800 2.100 4.900 5.300.4-4 3.500 1.200 5.200L9 13l-4.600 2.800 1.200-5.200-4-3.500 5.300-.4z" stroke="#cfcfcf" strokeWidth="1.400" /></Svg>
          </AddressBar>
          <Extensions>
            {extensions.map((e, i) => (
              <Extension key={i}>{Array.isArray(e) ? <>{e[0]}<Badge $bg={e[2]}>{e[1]}</Badge></> : e}</Extension>
            ))}
          </Extensions>
          <ToolbarEnd>
            <EndIcon $w={38.5}><Svg><path d="M9 1v10M5 7.500 9 11.500l4-4M1.500 11.500v4.500h15v-4.500" stroke="#3a8c1d" strokeWidth="1.600" /></Svg></EndIcon>
            <EndIcon $w={34.5}><Svg><path d="M1 3h10M1 7h10M1 11h6M14 12V3h3" stroke="#2f7d18" strokeWidth="1.700" /><circle cx="12.300" cy="12.300" r="2.200" fill="#2f7d18" /></Svg></EndIcon>
            <EndIcon $w={33.5}><Svg s={21} vb={22}><defs><clipPath id="av"><circle cx="11" cy="11" r="11" /></clipPath></defs><g clipPath="url(#av)"><path d="M0 0h22v22H0z" fill="#7a9cc8" /><path d="M0 12h22v4H0z" fill="#c2788e" /><path d="M0 16h22v6H0z" fill="#5d7fb4" /><path d="M4 6h3v5H4zM14 5h2v12h-2z" fill="#b8cbe6" /><path d="M9 8h2v6H9zM17 7h2v5h-2z" fill="#41609a" /></g></Svg></EndIcon>
            <Relaunch>Relaunch to update<svg width="4" height="16" viewBox="0 0 4 16" fill="#f4f4f4"><circle cx="2" cy="2.200" r="1.800" /><circle cx="2" cy="8" r="1.800" /><circle cx="2" cy="13.800" r="1.800" /></svg></Relaunch>
          </ToolbarEnd>
        </Toolbar>
        <Bookmarks>
          <AppsButton><Svg s={17}><g stroke="#37871c" strokeWidth="1.700"><rect x="2" y="2" width="4.500" height="4.500" /><rect x="11.500" y="2" width="4.500" height="4.500" /><rect x="2" y="11.500" width="4.500" height="4.500" /><rect x="11.500" y="11.500" width="4.500" height="4.500" /></g></Svg></AppsButton>
          <Divider $gap={15} />
          {bookmarks.map(([icon, label, w, ls, gap], i) => <Bookmark key={i} $w={w} $ls={ls} $gap={gap}>{icon}{label}</Bookmark>)}
          <More><Svg s={11} vb={11}><path d="m1.500 1.500 4 4-4 4m4.500-8 4 4-4 4" stroke={G} strokeWidth="1.200" /></Svg></More>
          <Divider $gap={17} />
          <Bookmark $w={118.500} $ls={-0.15} $gap={7.5}><Svg s={18}><path d="M1 3h5.500l2 2H17v10H1z" stroke="#37871c" strokeWidth="1.500" /></Svg>All Bookmarks</Bookmark>
        </Bookmarks>
      </Chrome>
      <Viewport>
        <Page>
          <Title>Results</Title>
          <Columns>
            <TextCard>
              <CardHead>
                <HeadLabel $ls={-0.15}>Uploaded Text</HeadLabel>
                <Counter $left="auto"><HeadLabel $ls={-0.5}>Words</HeadLabel>: 623</Counter>
                <Counter $left="20.5px"><HeadLabel $ls={0.02}>Characters</HeadLabel>: 4677</Counter>
              </CardHead>
              <ScrollArea>
                <Lines>{lines.map(([t, ls], i) => <Line key={i} $ls={ls}>{t}</Line>)}</Lines>
                <CardScroll>
                  <Arrow c="#8a8a8a" />
                  <Thumb $w={9} $h={38} $top={34} $bg="#8a8a8a" />
                  <Arrow down c="#8a8a8a" />
                </CardScroll>
              </ScrollArea>
              <CardFoot>
                <CopyIcon><Svg s={19} vb={19}><path d="M1 13V2.200Q1 1 2.200 1H14" stroke={navy} strokeWidth="1.600" /><rect x="5" y="5" width="13" height="13" rx="1.200" stroke={navy} strokeWidth="1.600" /></Svg></CopyIcon>
                <Button $w={148} $h={33} $focus $ls={-0.14}>Download Report</Button>
              </CardFoot>
            </TextCard>
            <ScoreCard>
              <Scores>
                <Ring />
                <Plagiarized><Value $c="#e2453c" $ls={0.5}>0%</Value> Plagiarized</Plagiarized>
                <Matches>
                  <Match>Exact Match <Value $c="#f08326" $ls={0.5}>0%</Value></Match>
                  <Match>Partial Match <Value $c="#1a5ff0" $ls={0.5}>0%</Value></Match>
                  <Match>Unique Content <Value $c="#34a04f">100%</Value></Match>
                </Matches>
              </Scores>
              <ScoresTitle>Plagiarized Scores</ScoresTitle>
            </ScoreCard>
          </Columns>
          <Actions>
            <Button $w={139} $h={44} $ls={-0.03}>Check New Text</Button>
            <Button $w={152} $h={46} $dark $ls={-0.12}>Detect AI Content</Button>
          </Actions>
        </Page>
        <PageScroll>
          <Arrow c="#a0a0a0" />
          <Thumb $w={10} $h={60} $top={74} $bg="#a0a0a0" />
          <Arrow down c="#a0a0a0" />
        </PageScroll>
      </Viewport>
    </Screen>
  );
}
